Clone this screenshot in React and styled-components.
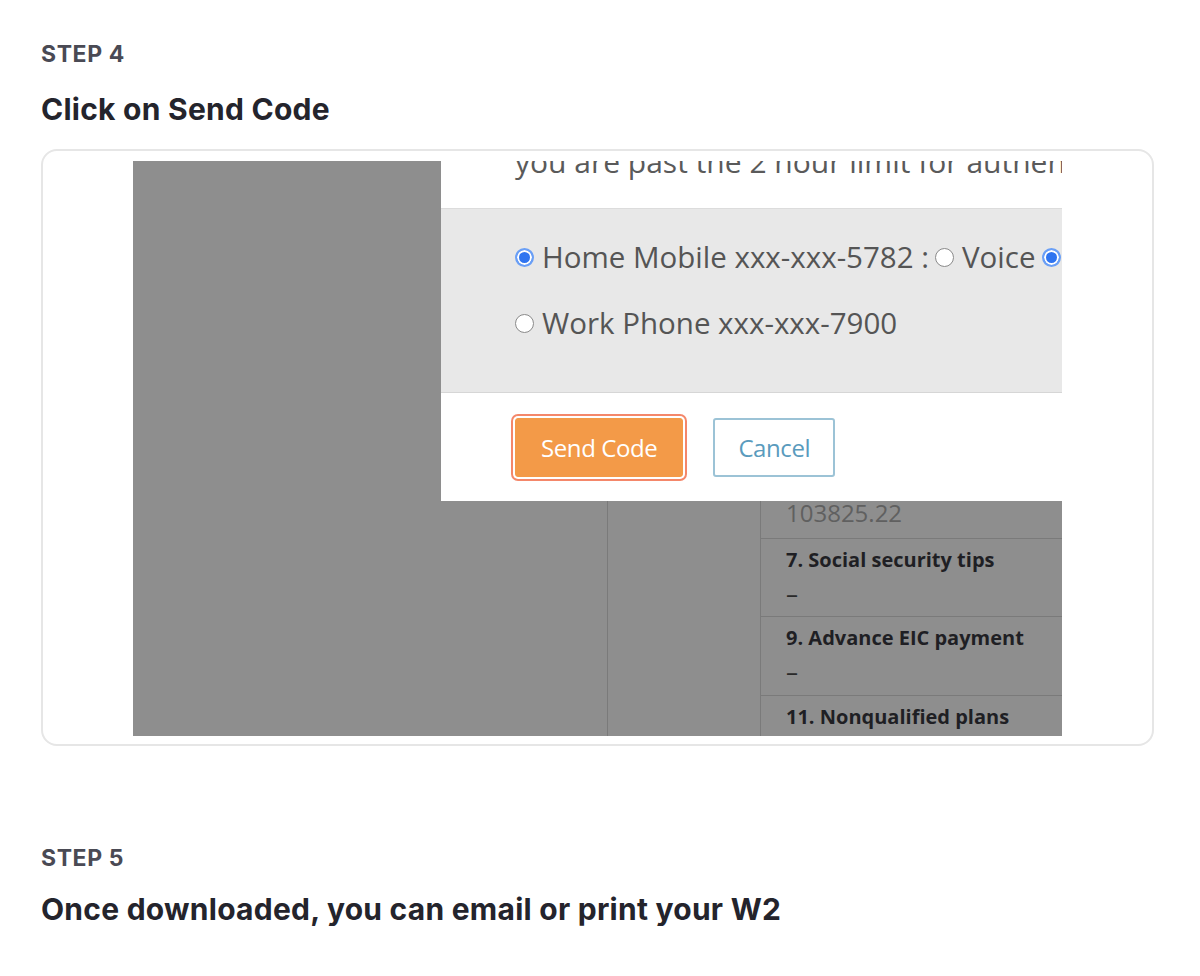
import styled, { createGlobalStyle } from 'styled-components';

const Global = createGlobalStyle`
  body {
    margin: 0;
    background: #fff;
    font-family: "Inter", "Liberation Sans", sans-serif;
  }
`

const Page = styled.div`
  padding: 40px 46px 0 41px;
`
const StepLabel = styled.div`
  font-size: 23px;
  font-weight: 700;
  color: #4a4a54;
  line-height: 28px;
  letter-spacing: 0.6px;
`
const Title = styled.h2`
  margin: ${p => p.$gap ?? 24}px 0 0;
  font-size: 30px;
  font-weight: 700;
  color: #24242c;
  line-height: 34px;
  letter-spacing: 0.25px;
`
const Card = styled.div`
  margin-top: 23px;
  border: 2px solid #e6e6e6;
  border-radius: 16px;
  height: 597px;
  padding: 10px 0 0;
  display: flex;
  justify-content: center;
  box-sizing: border-box;
`
const Shot = styled.div`
  position: relative;
  width: 929px;
  height: 575px;
  overflow: hidden;
  background: #8e8e8e;
  display: grid;
  grid-template-columns: 474px 153px 1fr;
  font-family: "Open Sans", "Liberation Sans", sans-serif;
`
const Col = styled.div`
  border-left: ${p => (p.$line ? '1px solid #7a7a7a' : 'none')};
  display: flex;
  flex-direction: column;
`
const Cell = styled.div`
  height: ${p => p.$h}px;
  flex-shrink: 0;
  border-top: ${p => (p.$first ? 'none' : '1px solid #7a7a7a')};
  padding: 8px 0 0 25px;
  box-sizing: border-box;
  display: flex;
  flex-direction: column;
  justify-content: ${p => (p.$end ? 'flex-end' : 'flex-start')};
  padding-bottom: ${p => (p.$end ? '10px' : '0')};
`
const CellLabel = styled.div`
  font-size: 20px;
  font-weight: 700;
  color: #1f1f24;
  line-height: 26px;
`
const CellValue = styled.div`
  font-size: 24px;
  color: ${p => (p.$dim ? '#606060' : '#2a2a2a')};
  line-height: 30px;
  margin-top: ${p => (p.$dim ? '0' : '6px')};
`

const Modal = styled.div`
  position: absolute;
  left: 308px;
  top: 0;
  width: 621px;
  height: 340px;
  background: #fff;
  overflow: hidden;
`
const Intro = styled.div`
  margin-top: -17px;
  padding-left: 74px;
  font-size: 30px;
  line-height: 36px;
  color: #5a5a5a;
  white-space: nowrap;
`
const Band = styled.div`
  margin-top: 28px;
  height: 185px;
  background: #e8e8e8;
  border-top: 1px solid #dcdcdc;
  border-bottom: 1px solid #d6d6d6;
  box-sizing: border-box;
  padding: 30px 0 0 74px;
  display: flex;
  flex-direction: column;
  gap: 30px;
`
const Row = styled.div`
  display: flex;
  align-items: center;
  white-space: nowrap;
  font-size: 29.5px;
  line-height: 36px;
  color: #555;
`
const Radio = styled.span`
  width: 19px;
  height: 19px;
  border-radius: 50%;
  box-sizing: border-box;
  flex-shrink: 0;
  margin: 0 8px 0 ${p => (p.$gap ? '6px' : '0')};
  border: ${p => (p.$on ? '2px solid #6a9ff6' : '1px solid #8a8a8a')};
  background: ${p => (p.$on ? '#2f74f0' : '#fff')};
  box-shadow: ${p => (p.$on ? 'inset 0 0 0 2px #fff' : 'none')};
`
const Actions = styled.div`
  display: flex;
  gap: 30px;
  padding: 25px 0 0 74px;
`
const Button = styled.button`
  height: 59px;
  padding: 0 ${p => (p.$primary ? '25px' : '23px')};
  border-radius: 3px;
  font-family: "Open Sans", "Liberation Sans", sans-serif;
  font-size: 24px;
  letter-spacing: -0.4px;
  cursor: pointer;
  background: ${p => (p.$primary ? '#f39a48' : '#fff')};
  color: ${p => (p.$primary ? '#fff' : '#5a9bbd')};
  border: ${p => (p.$primary ? '1px solid #f39a48' : '2px solid #9cc3d6')};
  box-shadow: ${p => (p.$primary ? '0 0 0 2px #fff, 0 0 0 4px #f4876a' : 'none')};
`

const Spacer = styled.div`
  height: 98px;
`

export default function App() {
  return (
    <>
      <Global />
      <Page>
        <StepLabel>STEP 4</StepLabel>
        <Title>Click on Send Code</Title>
        <Card>
          <Shot>
            <Col />
            <Col $line />
            <Col $line>
              <Cell $h={377} $first $end>
                <CellValue $dim>103825.22</CellValue>
              </Cell>
              <Cell $h={78}>
                <CellLabel>7. Social security tips</CellLabel>
                <CellValue>–</CellValue>
              </Cell>
              <Cell $h={79}>
                <CellLabel>9. Advance EIC payment</CellLabel>
                <CellValue>–</CellValue>
              </Cell>
              <Cell $h={78}>
                <CellLabel>11. Nonqualified plans</CellLabel>
              </Cell>
            </Col>
            <Modal>
              <Intro>you are past the 2 hour limit for authentication</Intro>
              <Band>
                <Row>
                  <Radio $on />Home Mobile xxx-xxx-5782 :<Radio $gap />Voice<Radio $gap $on />Text
                </Row>
                <Row>
                  <Radio />Work Phone xxx-xxx-7900
                </Row>
              </Band>
              <Actions>
                <Button $primary>Send Code</Button>
                <Button>Cancel</Button>
              </Actions>
            </Modal>
          </Shot>
        </Card>
        <Spacer />
        <StepLabel>STEP 5</StepLabel>
        <Title $gap={20}>Once downloaded, you can email or print your W2</Title>
      </Page>
    </>
  );
}
